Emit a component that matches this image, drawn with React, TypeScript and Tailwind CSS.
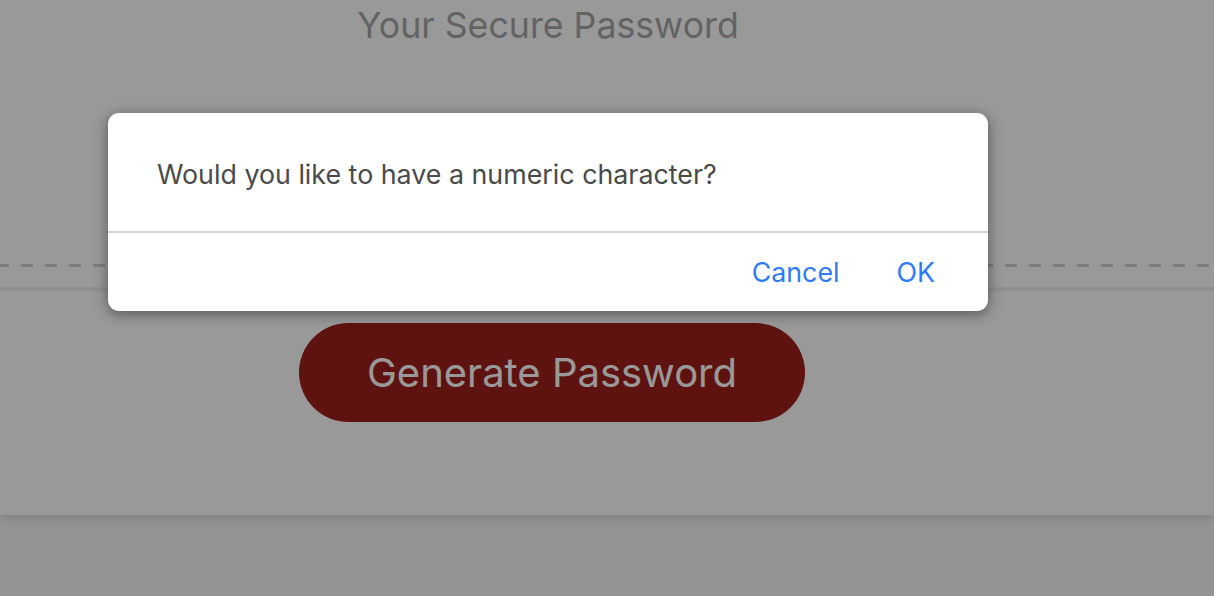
import React from "react";

const App = () => {
  return (
    <div
      className="relative min-h-screen overflow-hidden bg-[#f5f7fa]"
      style={{ fontFamily: "Inter, 'Noto Sans', sans-serif" }}
    >
      {/* page card */}
      <div className="h-[515px] bg-white shadow-[0_4px_10px_rgba(0,0,0,0.12)]">
        <div className="flex w-[1096px] flex-col items-center">
          <h2 className="mt-[4px] text-[35.7px] leading-[42px] font-normal text-[#a6a6a6]">
            Your Secure Password
          </h2>
        </div>
        <div className="mt-[218px] h-[3px] bg-[repeating-linear-gradient(90deg,#cfd1d8_0_9px,transparent_9px_21px,#cfd1d8_21px_24px)]" />
        <div className="mt-[20px] h-[4px] bg-[#eeeeee]" />
        <div className="flex w-[1104px] justify-center pt-[32px]">
          <button className="h-[99px] w-[506px] rounded-full bg-[#9d211b] text-[40px] text-white">
            Generate Password
          </button>
        </div>
      </div>

      {/* dim overlay */}
      <div className="absolute inset-0 bg-black/40" />

      {/* alert dialog */}
      <div className="absolute top-[113px] left-[108px] w-[880px] rounded-[11px] bg-white shadow-[0_3px_14px_rgba(0,0,0,0.45)]">
        <div className="flex h-[118px] items-center px-[49px] pt-[4px] text-[26.8px] text-[#4a4a4a]">
          Would you like to have a numeric character?
        </div>
        <div className="h-[2px] bg-[#d6d6d6]" />
        <div className="flex h-[78px] items-center justify-end gap-[57px] pr-[53px] pt-[1px] text-[26.8px] text-[#2f7bf5]">
          <button>Cancel</button>
          <button>OK</button>
        </div>
      </div>
    </div>
  );
};

export default App;
